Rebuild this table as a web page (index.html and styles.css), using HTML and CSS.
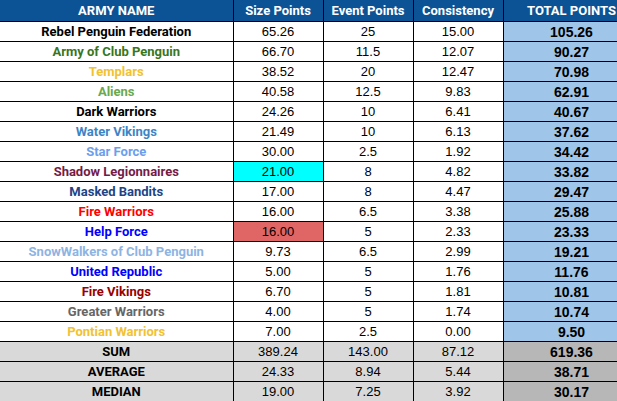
FILE: index.html
```html
<!DOCTYPE html>
<html>
<head>
<meta charset="utf-8">
<link rel="stylesheet" href="styles.css">
</head>
<body>
<table class="score">
<colgroup>
<col class="c-name"><col class="c-num"><col class="c-num"><col class="c-num"><col class="c-total">
</colgroup>
<thead>
<tr><th>ARMY NAME</th><th>Size Points</th><th>Event Points</th><th>Consistency</th><th>TOTAL POINTS</th></tr>
</thead>
<tbody>
<tr><td class="name black">Rebel Penguin Federation</td><td>65.26</td><td>25</td><td>15.00</td><td class="total">105.26</td></tr>
<tr><td class="name acp">Army of Club Penguin</td><td>66.70</td><td>11.5</td><td>12.07</td><td class="total">90.27</td></tr>
<tr><td class="name gold">Templars</td><td>38.52</td><td>20</td><td>12.47</td><td class="total">70.98</td></tr>
<tr><td class="name green">Aliens</td><td>40.58</td><td>12.5</td><td>9.83</td><td class="total">62.91</td></tr>
<tr><td class="name black">Dark Warriors</td><td>24.26</td><td>10</td><td>6.41</td><td class="total">40.67</td></tr>
<tr><td class="name water">Water Vikings</td><td>21.49</td><td>10</td><td>6.13</td><td class="total">37.62</td></tr>
<tr><td class="name star">Star Force</td><td>30.00</td><td>2.5</td><td>1.92</td><td class="total">34.42</td></tr>
<tr><td class="name shadow">Shadow Legionnaires</td><td class="cyan">21.00</td><td>8</td><td>4.82</td><td class="total">33.82</td></tr>
<tr><td class="name masked">Masked Bandits</td><td>17.00</td><td>8</td><td>4.47</td><td class="total">29.47</td></tr>
<tr><td class="name red">Fire Warriors</td><td>16.00</td><td>6.5</td><td>3.38</td><td class="total">25.88</td></tr>
<tr><td class="name blue">Help Force</td><td class="salmon">16.00</td><td>5</td><td>2.33</td><td class="total">23.33</td></tr>
<tr><td class="name snow">SnowWalkers of Club Penguin</td><td>9.73</td><td>6.5</td><td>2.99</td><td class="total">19.21</td></tr>
<tr><td class="name blue">United Republic</td><td>5.00</td><td>5</td><td>1.76</td><td class="total">11.76</td></tr>
<tr><td class="name darkred">Fire Vikings</td><td>6.70</td><td>5</td><td>1.81</td><td class="total">10.81</td></tr>
<tr><td class="name grey">Greater Warriors</td><td>4.00</td><td>5</td><td>1.74</td><td class="total">10.74</td></tr>
<tr><td class="name gold">Pontian Warriors</td><td>7.00</td><td>2.5</td><td>0.00</td><td class="total">9.50</td></tr>
<tr class="summary"><td class="name black">SUM</td><td>389.24</td><td>143.00</td><td>87.12</td><td class="total">619.36</td></tr>
<tr class="summary"><td class="name black">AVERAGE</td><td>24.33</td><td>8.94</td><td>5.44</td><td class="total">38.71</td></tr>
<tr class="summary"><td class="name black">MEDIAN</td><td>19.00</td><td>7.25</td><td>3.92</td><td class="total">30.17</td></tr>
</tbody>
</table>
</body>
</html>
```

FILE: styles.css
```css
html, body {
  margin: 0;
  padding: 0;
  background: #ffffff;
  overflow: hidden;
}
.score {
  border-collapse: collapse;
  table-layout: fixed;
  width: 640px;
  font-family: "Liberation Sans", Arial, sans-serif;
  font-size: 13px;
  color: #000;
}
.c-name { width: 233px; }
.c-num { width: 90px; }
.c-total { width: 137px; }
.score th {
  background: #0b5394;
  color: #ffffff;
  font-family: Roboto, "Liberation Sans", sans-serif;
  font-weight: 700;
  font-size: 13px;
  height: 21px;
  padding: 0;
  text-align: center;
  border-right: 1px solid #000;
  border-bottom: 1px solid #000;
}
.score td {
  height: 19px;
  padding: 0;
  text-align: center;
  border-right: 1px solid #000;
  border-bottom: 1px solid #000;
  white-space: nowrap;
}
.score td.name {
  font-family: Roboto, "Liberation Sans", sans-serif;
  font-weight: 700;
  font-size: 13px;
}
.score td.total {
  background: #9fc5e8;
  font-weight: 700;
  font-size: 14px;
}
.summary td { background: #d9d9d9; }
.summary td.total { background: #b7b7b7; }
.cyan { background: #00ffff; }
.salmon { background: #e06666; }
.black { color: #000000; }
.acp { color: #38761d; }
.gold { color: #f1c232; }
.green { color: #6aa84f; }
.water { color: #3d85c6; }
.star { color: #6d9eeb; }
.shadow { color: #741b47; }
.masked { color: #1c4587; }
.red { color: #ff0000; }
.blue { color: #0000ff; }
.snow { color: #8eb4e3; }
.darkred { color: #990000; }
.grey { color: #666666; }
```
